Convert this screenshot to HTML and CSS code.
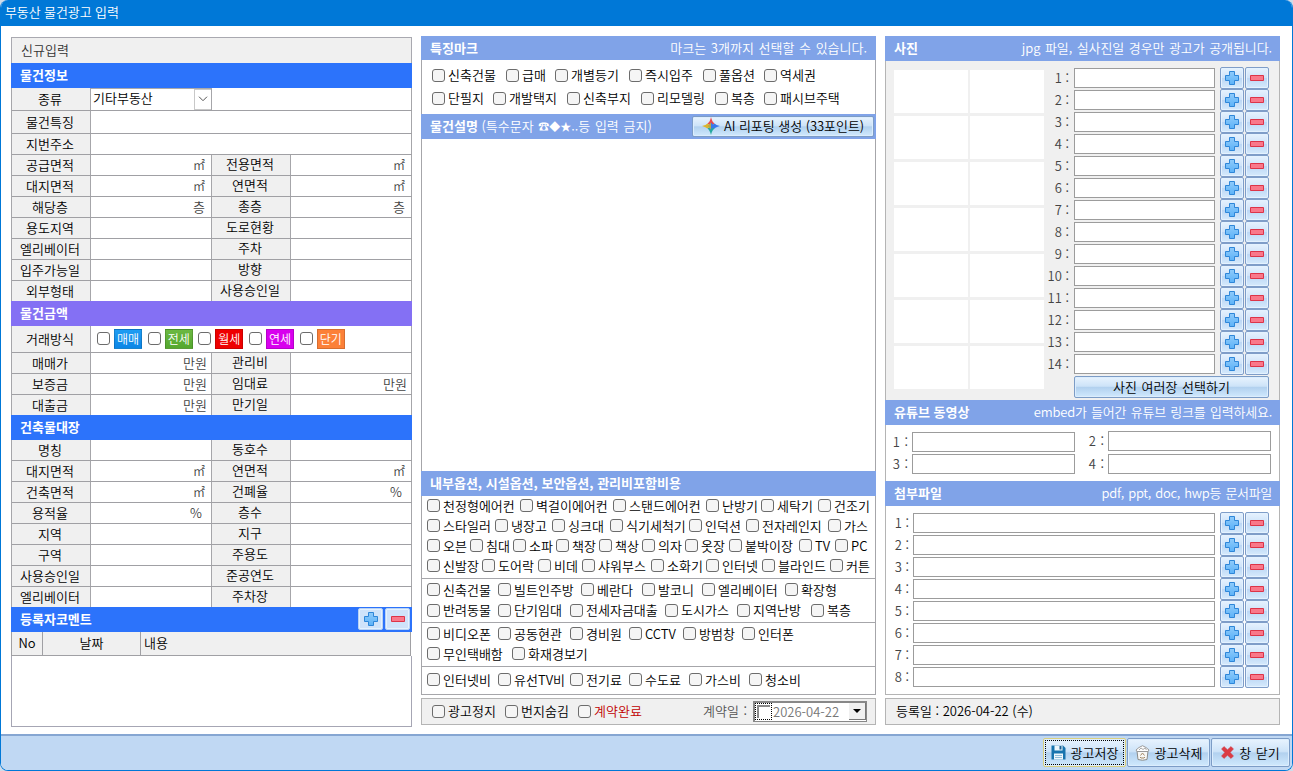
FILE: index.html
```html
<!DOCTYPE html>
<html lang="ko">
<head>
<meta charset="utf-8">
<title>부동산 물건광고 입력</title>
<link rel="stylesheet" href="styles.css">
</head>
<body>
<svg class="defs" width="0" height="0" aria-hidden="true">
  <linearGradient id="gp" x1="0" y1="0" x2="0" y2="1"><stop offset="0" stop-color="#8fcbfb"/><stop offset="1" stop-color="#5cb2f8"/></linearGradient>
  <symbol id="plus" viewBox="0 0 14 14"><path d="M4.500.5h5v4h4v5h-4v4h-5v-4h-4v-5h4z" fill="url(#gp)" stroke="#2e86d8"/></symbol>
  <symbol id="minus" viewBox="0 0 14 14"><path d="M.5 4.500h13v5H.5z" fill="#f9788a" stroke="#dc3448"/></symbol>
</svg>
<div class="window">
  <header class="titlebar">부동산 물건광고 입력</header>
  <main class="content">
    <section class="left">
      <div class="state">신규입력</div>
      <h2 class="bar blue">물건정보</h2>
      <div class="form">
        <div class="row tall"><b>종류</b><div class="select">기타부동산<i><svg width="10" height="6" viewBox="0 0 10 6"><path d="M1 .7l4 4 4-4" fill="none" stroke="#555"/></svg></i></div><span class="wide2"></span></div>
        <div class="row tall"><b>물건특징</b><span class="wide"></span></div>
        <div class="row"><b>지번주소</b><span class="wide"></span></div>
        <div class="row"><b>공급면적</b><span class="sq">㎡</span><b>전용면적</b><span class="sq">㎡</span></div>
        <div class="row"><b>대지면적</b><span class="sq">㎡</span><b>연면적</b><span class="sq">㎡</span></div>
        <div class="row"><b>해당층</b><span>층</span><b>총층</b><span>층</span></div>
        <div class="row"><b>용도지역</b><span></span><b>도로현황</b><span></span></div>
        <div class="row"><b>엘리베이터</b><span></span><b>주차</b><span></span></div>
        <div class="row"><b>입주가능일</b><span></span><b>방향</b><span></span></div>
        <div class="row"><b>외부형태</b><span></span><b>사용승인일</b><span></span></div>
      </div>
      <h2 class="bar purple">물건금액</h2>
      <div class="form">
        <div class="row deal"><b>거래방식</b><div class="wide kinds">
          <label><input type="checkbox"><em class="k1">매매</em></label><label><input type="checkbox"><em class="k2">전세</em></label><label><input type="checkbox"><em class="k3">월세</em></label><label><input type="checkbox"><em class="k4">연세</em></label><label><input type="checkbox"><em class="k5">단기</em></label>
        </div></div>
        <div class="row"><b>매매가</b><span class="won">만원</span><b>관리비</b><span></span></div>
        <div class="row"><b>보증금</b><span class="won">만원</span><b>임대료</b><span class="won">만원</span></div>
        <div class="row"><b>대출금</b><span class="won">만원</span><b>만기일</b><span></span></div>
      </div>
      <h2 class="bar blue">건축물대장</h2>
      <div class="form">
        <div class="row"><b>명칭</b><span></span><b>동호수</b><span></span></div>
        <div class="row"><b>대지면적</b><span class="sq">㎡</span><b>연면적</b><span class="sq">㎡</span></div>
        <div class="row"><b>건축면적</b><span class="sq">㎡</span><b>건폐율</b><span class="pct">%</span></div>
        <div class="row"><b>용적율</b><span class="pct">%</span><b>층수</b><span></span></div>
        <div class="row"><b>지역</b><span></span><b>지구</b><span></span></div>
        <div class="row"><b>구역</b><span></span><b>주용도</b><span></span></div>
        <div class="row"><b>사용승인일</b><span></span><b>준공연도</b><span></span></div>
        <div class="row"><b>엘리베이터</b><span></span><b>주차장</b><span></span></div>
      </div>
      <h2 class="bar blue comment">등록자코멘트<span class="pair"><button><svg><use href="#plus"/></svg></button><button><svg><use href="#minus"/></svg></button></span></h2>
      <div class="thead"><span>No</span><span>날짜</span><span>내용</span></div>
      <div class="tbody"></div>
    </section>

    <section class="mid">
      <h2 class="bar soft short"><span>특징마크</span><small class="limit">마크는 3개까지 선택할 수 있습니다.</small></h2>
      <div class="marks">
        <div class="opts m1"><label><input type="checkbox">신축건물</label><label><input type="checkbox">급매</label><label><input type="checkbox">개별등기</label><label><input type="checkbox">즉시입주</label><label><input type="checkbox">풀옵션</label><label><input type="checkbox">역세권</label></div>
        <div class="opts m2"><label><input type="checkbox">단필지</label><label><input type="checkbox">개발택지</label><label><input type="checkbox">신축부지</label><label><input type="checkbox">리모델링</label><label><input type="checkbox">복층</label><label><input type="checkbox">패시브주택</label></div>
      </div>
      <h2 class="bar soft desc"><span>물건설명 <small>(특수문자 <i class="sym">☎◆★</i>..등 입력 금지)</small></span>
        <button class="glass ai"><svg width="18" height="18" viewBox="0 0 18 18"><path d="M9 0q1.200 5 3.500 6.500L9 9 5.500 6.500Q8 5 9 0z" fill="#ea4a4e"/><path d="M18 9q-5 1.200-6.500 3.500L9 9l3.500-2.500Q14 8 18 9z" fill="#3a78ea"/><path d="M9 18q-1.200-5-3.500-6.500L9 9l3.500 2.500Q10 13 9 18z" fill="#26a9a0"/><path d="M0 9q4-1 5.500-2.500L9 9l-3.500 2.500Q4 10 0 9z" fill="#dcb52b"/><path d="M9 5.500L12.500 9 9 12.500z" fill="#3a78ea"/><path d="M9 5.500L5.500 9 9 12.500z" fill="#b9a94a"/></svg>AI 리포팅 생성 (33포인트)</button></h2>
      <div class="textarea"></div>
      <h2 class="bar soft"><span>내부옵션, 시설옵션, 보안옵션, 관리비포함비용</span></h2>
      <div class="group g1">
        <div class="opts o1"><label><input type="checkbox">천정형에어컨</label><label><input type="checkbox">벽걸이에어컨</label><label><input type="checkbox">스탠드에어컨</label><label><input type="checkbox">난방기</label><label><input type="checkbox">세탁기</label><label><input type="checkbox">건조기</label></div>
        <div class="opts o2"><label><input type="checkbox">스타일러</label><label><input type="checkbox">냉장고</label><label><input type="checkbox">싱크대</label><label><input type="checkbox">식기세척기</label><label><input type="checkbox">인덕션</label><label><input type="checkbox">전자레인지</label><label><input type="checkbox">가스</label></div>
        <div class="opts o3"><label><input type="checkbox">오븐</label><label><input type="checkbox">침대</label><label><input type="checkbox">소파</label><label><input type="checkbox">책장</label><label><input type="checkbox">책상</label><label><input type="checkbox">의자</label><label><input type="checkbox">옷장</label><label><input type="checkbox">붙박이장</label><label><input type="checkbox">TV</label><label><input type="checkbox">PC</label></div>
        <div class="opts o4"><label><input type="checkbox">신발장</label><label><input type="checkbox">도어락</label><label><input type="checkbox">비데</label><label><input type="checkbox">샤워부스</label><label><input type="checkbox">소화기</label><label><input type="checkbox">인터넷</label><label><input type="checkbox">블라인드</label><label><input type="checkbox">커튼</label></div>
      </div>
      <div class="group g2">
        <div class="opts o5"><label><input type="checkbox">신축건물</label><label><input type="checkbox">빌트인주방</label><label><input type="checkbox">베란다</label><label><input type="checkbox">발코니</label><label><input type="checkbox">엘리베이터</label><label><input type="checkbox">확장형</label></div>
        <div class="opts o6"><label><input type="checkbox">반려동물</label><label><input type="checkbox">단기임대</label><label><input type="checkbox">전세자금대출</label><label><input type="checkbox">도시가스</label><label><input type="checkbox">지역난방</label><label><input type="checkbox">복층</label></div>
      </div>
      <div class="group g3">
        <div class="opts o7"><label><input type="checkbox">비디오폰</label><label><input type="checkbox">공동현관</label><label><input type="checkbox">경비원</label><label><input type="checkbox">CCTV</label><label><input type="checkbox">방범창</label><label><input type="checkbox">인터폰</label></div>
        <div class="opts o8"><label><input type="checkbox">무인택배함</label><label><input type="checkbox">화재경보기</label></div>
      </div>
      <div class="group g4">
        <div class="opts o9"><label><input type="checkbox">인터넷비</label><label><input type="checkbox">유선TV비</label><label><input type="checkbox">전기료</label><label><input type="checkbox">수도료</label><label><input type="checkbox">가스비</label><label><input type="checkbox">청소비</label></div>
      </div>
      <div class="status">
        <div class="opts s1"><label><input type="checkbox">광고정지</label><label><input type="checkbox">번지숨김</label><label class="red"><input type="checkbox">계약완료</label></div>
        <span class="dlabel">계약일 :</span>
        <div class="date"><i class="focus"></i><span>2026-04-22</span><i class="drop"></i></div>
      </div>
    </section>

    <section class="right">
      <h2 class="bar soft"><span>사진</span><small class="jpg">jpg 파일, 실사진일 경우만 광고가 공개됩니다.</small></h2>
      <div class="photos">
        <div class="thumbs"><i></i><i></i><i></i><i></i><i></i><i></i><i></i><i></i><i></i><i></i><i></i><i></i><i></i><i></i></div>
        <div class="files">
          <div class="file"><span>1 :</span><input type="text"><button><svg><use href="#plus"/></svg></button><button><svg><use href="#minus"/></svg></button></div>
          <div class="file"><span>2 :</span><input type="text"><button><svg><use href="#plus"/></svg></button><button><svg><use href="#minus"/></svg></button></div>
          <div class="file"><span>3 :</span><input type="text"><button><svg><use href="#plus"/></svg></button><button><svg><use href="#minus"/></svg></button></div>
          <div class="file"><span>4 :</span><input type="text"><button><svg><use href="#plus"/></svg></button><button><svg><use href="#minus"/></svg></button></div>
          <div class="file"><span>5 :</span><input type="text"><button><svg><use href="#plus"/></svg></button><button><svg><use href="#minus"/></svg></button></div>
          <div class="file"><span>6 :</span><input type="text"><button><svg><use href="#plus"/></svg></button><button><svg><use href="#minus"/></svg></button></div>
          <div class="file"><span>7 :</span><input type="text"><button><svg><use href="#plus"/></svg></button><button><svg><use href="#minus"/></svg></button></div>
          <div class="file"><span>8 :</span><input type="text"><button><svg><use href="#plus"/></svg></button><button><svg><use href="#minus"/></svg></button></div>
          <div class="file"><span>9 :</span><input type="text"><button><svg><use href="#plus"/></svg></button><button><svg><use href="#minus"/></svg></button></div>
          <div class="file"><span>10 :</span><input type="text"><button><svg><use href="#plus"/></svg></button><button><svg><use href="#minus"/></svg></button></div>
          <div class="file"><span>11 :</span><input type="text"><button><svg><use href="#plus"/></svg></button><button><svg><use href="#minus"/></svg></button></div>
          <div class="file"><span>12 :</span><input type="text"><button><svg><use href="#plus"/></svg></button><button><svg><use href="#minus"/></svg></button></div>
          <div class="file"><span>13 :</span><input type="text"><button><svg><use href="#plus"/></svg></button><button><svg><use href="#minus"/></svg></button></div>
          <div class="file"><span>14 :</span><input type="text"><button><svg><use href="#plus"/></svg></button><button><svg><use href="#minus"/></svg></button></div>
          <button class="glass multi">사진 여러장 선택하기</button>
        </div>
      </div>
      <h2 class="bar soft"><span>유튜브 동영상</span><small class="embed">embed가 들어간 유튜브 링크를 입력하세요.</small></h2>
      <div class="youtube">
        <div><span>1 :</span><input type="text"></div><div class="up"><span>2 :</span><input type="text"></div>
        <div><span>3 :</span><input type="text"></div><div><span>4 :</span><input type="text"></div>
      </div>
      <h2 class="bar soft"><span>첨부파일</span><small class="docs">pdf, ppt, doc, hwp등 문서파일</small></h2>
      <div class="attach">
        <div class="file"><span>1 :</span><input type="text"><button><svg><use href="#plus"/></svg></button><button><svg><use href="#minus"/></svg></button></div>
        <div class="file"><span>2 :</span><input type="text"><button><svg><use href="#plus"/></svg></button><button><svg><use href="#minus"/></svg></button></div>
        <div class="file"><span>3 :</span><input type="text"><button><svg><use href="#plus"/></svg></button><button><svg><use href="#minus"/></svg></button></div>
        <div class="file"><span>4 :</span><input type="text"><button><svg><use href="#plus"/></svg></button><button><svg><use href="#minus"/></svg></button></div>
        <div class="file"><span>5 :</span><input type="text"><button><svg><use href="#plus"/></svg></button><button><svg><use href="#minus"/></svg></button></div>
        <div class="file"><span>6 :</span><input type="text"><button><svg><use href="#plus"/></svg></button><button><svg><use href="#minus"/></svg></button></div>
        <div class="file"><span>7 :</span><input type="text"><button><svg><use href="#plus"/></svg></button><button><svg><use href="#minus"/></svg></button></div>
        <div class="file"><span>8 :</span><input type="text"><button><svg><use href="#plus"/></svg></button><button><svg><use href="#minus"/></svg></button></div>
      </div>
      <div class="status reg">등록일 : 2026-04-22 (수)</div>
    </section>
  </main>
  <footer class="actions">
    <button class="glass save"><svg width="15" height="15" viewBox="0 0 15 15"><path d="M1 .5h11L14.500 3v11.500H.5V.5z" fill="#1874ae"/><path d="M3.500.5h8v5h-8zM3 8.500h9v6H3z" fill="#eef7fc"/><path d="M8.500 1h2v3.500h-2z" fill="#1c5f92"/><path d="M4 10h7v1H4zm0 2h7v1H4z" fill="#8fbcd8"/></svg>광고저장</button>
    <button class="glass del"><svg width="15" height="16" viewBox="0 0 15 16"><path d="M2 6h11l-1 8.500q-4.500 1.500-9 0z" fill="#f7f7f5" stroke="#8b8b88"/><path d="M1 5l3-2.500L7.500.7 11 2.500 14 5l-1 1.500H2z" fill="#fff" stroke="#999" stroke-linejoin="round"/><path d="M4 5l2-2 2 1.500L10 3l1.500 2" fill="none" stroke="#aaa"/><path d="M5.500 10.500l2-2.500 2 2.500m.5 1.500l-1 1H6l-1-1" fill="none" stroke="#a58a66"/></svg>광고삭제</button>
    <button class="glass close"><svg width="13" height="13" viewBox="0 0 13 13"><path d="M3 .5l3.500 3.200L10 .5 12.500 3 9.200 6.500l3.300 3.500-2.500 2.500-3.500-3.300L3 12.500.5 10l3.300-3.500L.5 3z" fill="#dc3b44" stroke="#c8404a" stroke-width=".5"/></svg>창 닫기</button>
  </footer>
</div>
</body>
</html>
```

FILE: styles.css
```css
* { box-sizing: border-box; }
body {
  margin: 0;
  background: #cfdcea;
  font: 350 13px/18px "Noto Sans CJK KR", "Noto Sans", sans-serif;
  color: #000;
}
button, input { font: inherit; color: inherit; margin: 0; padding: 0; }
b, em, i { font-weight: inherit; font-style: normal; }
.defs { position: absolute; }

.window {
  width: 1293px;
  height: 771px;
  display: flex;
  flex-direction: column;
  border: 1px solid #0078d7;
  border-top: 0;
  border-radius: 8px;
  background: #fff;
  overflow: hidden;
}
.titlebar {
  height: 26px;
  padding: 3px 4px;
  background: #0078d7;
  color: #fff;
  letter-spacing: -.1px;
}
.content {
  height: 709px;
  padding: 10px 0 0 10px;
  display: flex;
  align-items: flex-start;
}
.left { width: 401px; margin: 1px 9px 0 0; }
.mid { width: 455px; margin-right: 9px; }
.right { width: 395px; }

.bar {
  margin: 0;
  height: 25px;
  padding: 0 8px 0 9px;
  display: flex;
  align-items: center;
  justify-content: space-between;
  font-size: 13px;
  font-weight: 700;
  line-height: 24px;
  color: #fff;
  white-space: nowrap;
}
.bar small { font-size: 13px; font-weight: 350; word-spacing: 1px; }
.bar .limit { padding-right: 1px; }
.bar .jpg { letter-spacing: -.08px; }
.bar .embed { letter-spacing: -.22px; }
.bar .docs { letter-spacing: -.32px; }
.bar.short { height: 24px; }
.blue { background: #2c73fb; }
.purple { background: #8470f4; }
.soft { background: #80a3e8; }

/* Property form */
.state {
  height: 26px;
  padding: 3px 9px;
  border: 1px solid #a9a9b0;
  border-bottom: 0;
  background: #f0f0f0;
  color: #333;
}
.form { border-left: 1px solid #a6a6aa; }
.row {
  display: grid;
  grid-template-columns: 79px 121px 79px 121px;
  height: 21px;
  line-height: 19px;
  border-bottom: 1px solid #a0a0a4;
}
.row:last-child { height: 20px; border-bottom: 0; }
.row.tall { height: 23px; line-height: 22px; }
.row.deal { height: 27px; line-height: 25px; }
.row > * { border-right: 1px solid #a6a6aa; }
.row > b { padding-right: 2px; background: #f0f0f0; text-align: center; }
.row > b:nth-child(3) { line-height: 18px; }
.row > span { padding-right: 6px; text-align: right; color: #444; }
.row > .sq { font-size: 12px; }
.row > .won { padding-right: 4px; }
.row > .pct { padding-right: 9px; }
.row > .wide { grid-column: span 3; }
.row > .wide2 { grid-column: span 2; }
.row > .select {
  display: flex;
  justify-content: space-between;
  padding-left: 2px;
  line-height: 18px;
  border-top: 1px solid #aaa;
}
.select i {
  width: 17px;
  display: flex;
  align-items: center;
  justify-content: center;
  border: 1px solid #c8c8c8;
  border-right: 0;
}
.kinds { display: flex; align-items: center; padding-left: 6px; }
.kinds label { width: 50.700px; display: flex; align-items: center; gap: 4px; }
.kinds em {
  width: 28px;
  height: 20px;
  border: 1px solid rgba(0, 0, 0, .15);
  color: #fff;
  font-size: 12px;
  line-height: 17px;
  text-align: center;
}
.k1 { background: linear-gradient(#1e9cf2, #0c86e6); }
.k2 { background: linear-gradient(#6cb842, #54a82e); }
.k3 { background: #ee0000; }
.k4 { background: #d800ee; }
.k5 { background: #fc8038; }

.comment { padding-right: 2px; line-height: 22px; }
.pair { display: flex; gap: 2px; }
.thead {
  display: grid;
  grid-template-columns: 31px 98px 1fr;
  height: 24px;
  margin-right: 1px;
  line-height: 22px;
  border: 1px solid #a0a0a4;
  border-top: 0;
  background: #f0f0f0;
}
.thead span { text-align: center; border-right: 1px solid #a0a0a4; }
.thead span:last-child { text-align: left; padding-left: 3px; border: 0; }
.tbody { height: 71px; border: 1px solid #a6a6b4; border-top: 0; }

/* Check boxes */
input[type="checkbox"] {
  appearance: none;
  flex: none;
  width: 13px;
  height: 13px;
  border: 1px solid #6c6c6c;
  border-radius: 3px;
  background: #f5f5f5;
}
.kinds input[type="checkbox"] { background: #fff; }
.opts { display: grid; height: 20px; align-items: center; white-space: nowrap; }
.opts label { display: flex; align-items: center; gap: 3px; }
.marks {
  height: 54px;
  padding: 4px 0 0 10px;
  border: solid #a6a6aa;
  border-width: 0 1px;
}
.marks .opts { height: 23px; }
.m1 { grid-template-columns: 74px 49px 74px 74px 61px auto; }
.m2 { grid-template-columns: 61px 74px 74px 74px 49px auto; }
.desc { padding-right: 2px; }
.desc > span { word-spacing: 0; }
.sym { font-size: 11px; font-weight: 500; }
.textarea { height: 332px; border: solid #a6a6aa; border-width: 0 1px; }
.group { border: 1px solid #a6a6aa; border-top: 0; padding-left: 5px; }
.g1 { height: 83px; }
.g2 { height: 44px; padding-top: 1px; }
.g2 .opts:last-child { height: 21px; }
.g3 { height: 44px; padding-top: 1px; }
.g4 { height: 28px; padding-top: 3px; }
.o1 { grid-template-columns: 93px 93px 93px 55px 57px auto; }
.o2 { grid-template-columns: 68px 57px 58px 79px 57px 82px auto; }
.o3 { grid-template-columns: 43px 43px 43px 43px 43px 43px 44px 70px 36px auto; }
.o4 { grid-template-columns: 55px 56px 44px 69px 55px 56px 68px auto; }
.o5 { grid-template-columns: 71px 83px 61px 60px 83px auto; }
.o6 { grid-template-columns: 71px 72px 95px 72px 74px auto; }
.o7 { grid-template-columns: 71px 72px 59px 54px 59px auto; }
.o8 { grid-template-columns: 85px auto; }
.o9 { grid-template-columns: 71px 72px 59px 60px 60px auto; }

.status {
  height: 27px;
  margin-top: 3px;
  padding-left: 10px;
  display: flex;
  align-items: center;
  border: 1px solid #b4b4b4;
  background: #f0f0f0;
}
.s1 { width: 271px; grid-template-columns: 73px 73px auto; }
.red { color: #c00000; }
.dlabel { width: 50px; color: #555; word-spacing: 1px; }
.date {
  width: 114px;
  height: 21px;
  display: flex;
  align-items: center;
  border: 1px solid #888;
  border-width: 2px 1px 1px 2px;
  background: #fff;
  color: #777;
}
.date span { flex: 1; padding-left: 1px; }
.focus { width: 17px; height: 17px; border: 1px dotted #000; display: flex; }
.focus::before { content: ""; flex: 1; margin: 1px; border: solid #888; border-width: 2px 0 0 2px; }
.drop {
  width: 17px;
  height: 17px;
  display: flex;
  align-items: center;
  justify-content: center;
  background: #f0f0f0;
  border: 1px solid #777;
  border-width: 0 1px 1px 0;
}
.drop::before { content: ""; border: 4px solid transparent; border-top-color: #000; border-bottom: 0; }

/* Attachments */
.photos {
  height: 339px;
  padding: 6px 11px 0 8px;
  display: flex;
  justify-content: space-between;
  border: solid #b4b4b4;
  border-width: 0 1px;
  background: #f0f0f0;
}
.thumbs {
  display: grid;
  grid-template-columns: 74px 74px;
  grid-auto-rows: 43px;
  gap: 3px 2px;
  align-content: start;
  padding-top: 3px;
}
.thumbs i { background: #fff; }
.files { display: flex; flex-direction: column; align-items: flex-end; }
.file { display: flex; align-items: center; height: 22px; }
.file span { width: 30px; padding-right: 5px; text-align: right; color: #444; white-space: nowrap; }
.file button + button { margin-left: 1px; }
input[type="text"] { flex: none; width: 141px; height: 20px; border: 1px solid #9c9c9c; background: #fff; }
.file input[type="text"] { margin-right: 5px; }
.file button, .pair button {
  flex: none;
  width: 24px;
  height: 22px;
  display: flex;
  align-items: center;
  justify-content: center;
  border: 1px solid #7f9dc8;
  border-radius: 2px;
  background: linear-gradient(#e6f2fe, #cfe3f9 48%, #bcd7f5 52%, #d6eafc);
  box-shadow: inset 0 0 0 1px #e4f2ff;
}
.file svg, .pair svg { width: 14px; height: 14px; }
.pair button { width: 25px; border-color: #b8d2f4; background: #cfe3fa; }
.glass {
  display: flex;
  align-items: center;
  justify-content: center;
  border: 1px solid #7c9cc6;
  border-radius: 2px;
  background: linear-gradient(#e8f3fe, #cde3f8 46%, #b2d1ef 52%, #d0e9fd);
  box-shadow: inset 0 0 0 1px #dcedfd;
  color: #000;
  white-space: nowrap;
  word-spacing: 1px;
}
.multi { width: 195px; height: 22px; margin-top: 1px; line-height: 18px; }
.ai { width: 182px; height: 21px; gap: 4px; font-weight: 350; word-spacing: 0; letter-spacing: -.05px; }
.youtube {
  height: 56px;
  padding: 6px 8px 0 6px;
  display: grid;
  grid-template-columns: 196px 183px;
  grid-auto-rows: 22px;
  border: solid #b4b4b4;
  border-width: 0 1px;
  white-space: nowrap;
}
.youtube div { display: flex; align-items: center; justify-content: flex-end; color: #444; word-spacing: 1px; }
.youtube div:nth-child(odd) { padding-right: 13px; }
.youtube .up { padding-bottom: 2px; }
.youtube span { padding-right: 4px; }
.youtube input[type="text"] { width: 163px; }
.attach { height: 189px; padding: 6px 10px 0 0; border: 1px solid #b4b4b4; border-top: 0; }
.attach .file { justify-content: flex-end; }
.attach .file input[type="text"] { width: 302px; }
.attach .file span { width: 26px; padding-right: 4px; }

.actions {
  height: 36px;
  padding: 2px 2px 0;
  display: flex;
  justify-content: flex-end;
  gap: 1px;
  border-top: 2px solid #86a6d2;
  background: #c0d8f3;
}
.actions .glass { height: 29px; gap: 5px; }
.actions .save {
  width: 83px;
  border-color: #d9cf80;
  outline: 1px dotted #000;
  outline-offset: -3px;
}
.actions .del { width: 83px; }
.actions .close { width: 79px; }
```
